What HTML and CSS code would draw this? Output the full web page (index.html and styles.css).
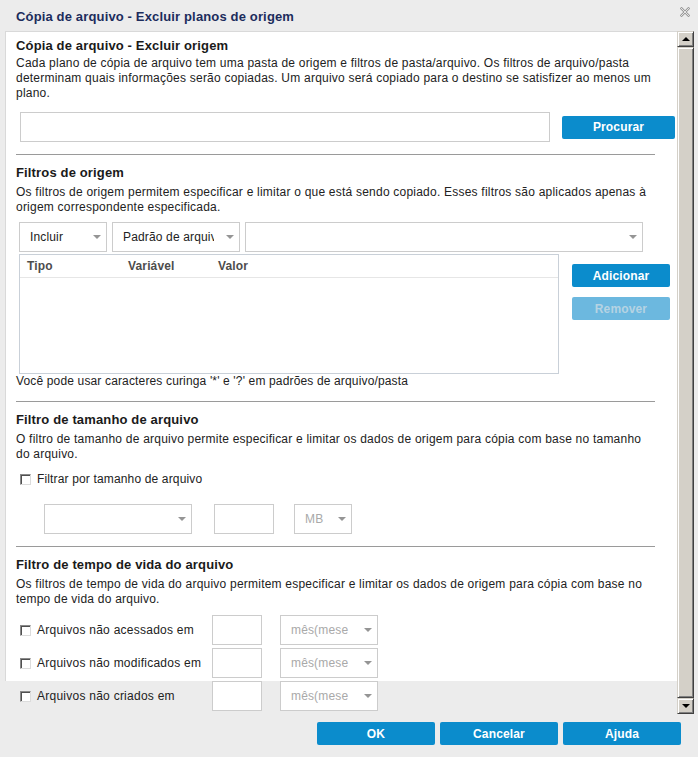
FILE: index.html
```html
<!DOCTYPE html>
<html lang="pt-BR">
<head>
<meta charset="utf-8">
<title>Cópia de arquivo - Excluir planos de origem</title>
<link rel="stylesheet" href="styles.css">
</head>
<body>
<div class="titlebar">
  <div class="title">Cópia de arquivo - Excluir planos de origem</div>
  <svg class="close" width="10" height="10" viewBox="0 0 10 10">
    <path d="M0.5 0.5 L9.5 9.5 M9.5 0.5 L0.5 9.5" stroke="#9c9c9c" stroke-width="2.6" fill="none"/>
    <path d="M0.5 0.5 L9.5 9.5 M9.5 0.5 L0.5 9.5" stroke="#ececec" stroke-width="0.9" fill="none"/>
  </svg>
</div>
<div class="main">
  <div class="panel">
    <section class="sec">
      <h2 class="heading">Cópia de arquivo - Excluir origem</h2>
      <p class="desc desc-first">Cada plano de cópia de arquivo tem uma pasta de origem e filtros de pasta/arquivo. Os filtros de arquivo/pasta<br>determinam quais informações serão copiadas. Um arquivo será copiado para o destino se satisfizer ao menos um<br>plano.</p>
      <div class="browse-row">
        <div class="textbox textbox-path"></div>
        <button class="btn btn-browse">Procurar</button>
      </div>
    </section>
    <hr class="sep">
    <section class="sec">
      <h2 class="heading">Filtros de origem</h2>
      <p class="desc">Os filtros de origem permitem especificar e limitar o que está sendo copiado. Esses filtros são aplicados apenas à<br>origem correspondente especificada.</p>
      <div class="filter-row">
        <div class="select sel-include"><span class="select-text">Incluir</span><span class="arrow"></span></div>
        <div class="select sel-type"><span class="select-text">Padrão de arquivo</span><span class="arrow"></span></div>
        <div class="select sel-value"><span class="select-text"></span><span class="arrow"></span></div>
      </div>
      <div class="table-area">
        <div class="grid-table">
          <div class="grid-head">
            <div class="cell">Tipo</div>
            <div class="cell">Variável</div>
            <div class="cell">Valor</div>
          </div>
        </div>
        <div class="side-buttons">
          <button class="btn btn-side">Adicionar</button>
          <button class="btn btn-side btn-disabled">Remover</button>
        </div>
      </div>
      <p class="hint">Você pode usar caracteres curinga '*' e '?' em padrões de arquivo/pasta</p>
    </section>
    <hr class="sep">
    <section class="sec">
      <h2 class="heading">Filtro de tamanho de arquivo</h2>
      <p class="desc">O filtro de tamanho de arquivo permite especificar e limitar os dados de origem para cópia com base no tamanho<br>do arquivo.</p>
      <label class="check-row"><span class="checkbox"></span><span>Filtrar por tamanho de arquivo</span></label>
      <div class="size-row">
        <div class="select sel-size"><span class="select-text"></span><span class="arrow"></span></div>
        <div class="textbox textbox-size"></div>
        <div class="select sel-unit"><span class="select-text disabled">MB</span><span class="arrow"></span></div>
      </div>
    </section>
    <hr class="sep">
    <section class="sec">
      <h2 class="heading">Filtro de tempo de vida do arquivo</h2>
      <p class="desc">Os filtros de tempo de vida do arquivo permitem especificar e limitar os dados de origem para cópia com base no<br>tempo de vida do arquivo.</p>
      <div class="life-rows">
        <div class="life-row">
          <label class="life-label"><span class="checkbox"></span><span>Arquivos não acessados em</span></label>
          <div class="textbox"></div>
          <div class="select"><span class="select-text disabled">mês(mese</span><span class="arrow"></span></div>
        </div>
        <div class="life-row">
          <label class="life-label"><span class="checkbox"></span><span>Arquivos não modificados em</span></label>
          <div class="textbox"></div>
          <div class="select"><span class="select-text disabled">mês(mese</span><span class="arrow"></span></div>
        </div>
        <div class="life-row">
          <label class="life-label"><span class="checkbox"></span><span>Arquivos não criados em</span></label>
          <div class="textbox"></div>
          <div class="select"><span class="select-text disabled">mês(mese</span><span class="arrow"></span></div>
        </div>
      </div>
    </section>
  </div>
  <div class="scrollbar">
    <div class="sb-btn"><span class="tri-up"></span></div>
    <div class="sb-thumb"></div>
    <div class="sb-btn"><span class="tri-down"></span></div>
  </div>
</div>
<div class="footer">
  <button class="btn btn-footer">OK</button>
  <button class="btn btn-footer">Cancelar</button>
  <button class="btn btn-footer">Ajuda</button>
</div>
</body>
</html>
```

FILE: styles.css
```css
* { box-sizing: border-box; }

html, body { margin: 0; padding: 0; }

body {
  width: 698px;
  height: 757px;
  overflow: hidden;
  background: #ececec;
  font-family: "Liberation Sans", Arial, sans-serif;
  font-size: 12px;
  color: #222;
  letter-spacing: 0.15px;
}

/* Title bar */
.titlebar {
  height: 31px;
  display: flex;
  justify-content: space-between;
  align-items: flex-start;
  padding: 7px 8px 0 16px;
}
.title {
  margin-top: 2px;
  font-size: 13px;
  line-height: 16px;
  font-weight: bold;
  color: #1c2c5c;
}
.close { display: block; }

/* Main area */
.main {
  display: flex;
  align-items: flex-start;
  margin-left: 5px;
}
.panel {
  width: 672px;
  height: 650px;
  background: #fff;
  border-top: 1px solid #d9d9d9;
  border-left: 1px solid #d9d9d9;
  padding: 6px 0 0 10px;
}

.heading {
  margin: 0;
  font-size: 13px;
  line-height: 16px;
  font-weight: bold;
  color: #1a1a1a;
}
.desc {
  margin: 4px 0 0;
  line-height: 15px;
  white-space: nowrap;
  letter-spacing: 0.22px;
}
.desc-first { margin-top: 2px; }

.sep {
  width: 639px;
  height: 1px;
  border: 0;
  margin: 12px 0 10px;
  background: #9a9a9a;
}

/* Inputs */
.textbox {
  height: 30px;
  border: 1px solid #cccccc;
  background: #fff;
}
.select {
  display: flex;
  align-items: center;
  height: 30px;
  border: 1px solid #cccccc;
  background: #fff;
  padding: 0 5px 0 10px;
}
.select-text {
  flex: 1;
  overflow: hidden;
  white-space: nowrap;
  margin-right: 12px;
  line-height: 15px;
}
.select-text.disabled { color: #a9a9a9; }
.arrow {
  flex: none;
  width: 0;
  height: 0;
  border-left: 4px solid transparent;
  border-right: 4px solid transparent;
  border-top: 4px solid #959595;
}

/* Buttons */
.btn {
  display: flex;
  align-items: center;
  justify-content: center;
  height: 23px;
  padding: 0;
  border: 0;
  border-radius: 2px;
  background: #0b8ccc;
  color: #fff;
  font-family: "Liberation Sans", Arial, sans-serif;
  font-size: 12px;
  font-weight: bold;
  letter-spacing: 0.15px;
}
.btn-disabled {
  background: #6cb8df;
  color: #b5d3e3;
}

/* Section 1 */
.browse-row {
  display: flex;
  align-items: center;
  margin: 11px 0 0 4px;
}
.textbox-path { width: 530px; }
.btn-browse { width: 113px; margin-left: 12px; }

/* Section 2 */
.filter-row {
  display: flex;
  gap: 5px;
  margin: 7px 0 0 3px;
}
.sel-include { width: 88px; }
.sel-type { width: 128px; }
.sel-value { width: 398px; }

.table-area {
  display: flex;
  margin: 2px 0 0 3px;
}
.grid-table {
  width: 540px;
  height: 120px;
  border: 1px solid #c9d0d8;
  background: #fff;
}
.grid-head {
  display: grid;
  grid-template-columns: 101px 90px 1fr;
  height: 23px;
  border-bottom: 1px solid #e6e6e6;
}
.cell {
  padding-left: 7px;
  line-height: 22px;
  font-weight: bold;
  color: #4d4d4d;
}
.side-buttons {
  display: flex;
  flex-direction: column;
  gap: 10px;
  margin-left: 13px;
  padding-top: 10px;
}
.btn-side { width: 98px; }

.hint {
  margin: 0;
  line-height: 15px;
}

/* Section 3 */
.check-row {
  display: flex;
  align-items: center;
  gap: 6px;
  margin: 10px 0 0 4px;
  line-height: 15px;
}
.checkbox {
  flex: none;
  width: 11px;
  height: 11px;
  background: #fff;
  border: 1px solid;
  border-color: #8a8a8a #dcdcdc #dcdcdc #8a8a8a;
  box-shadow: inset 1px 1px 0 #505050;
}
.size-row {
  display: flex;
  margin: 17px 0 0 28px;
}
.sel-size { width: 148px; }
.textbox-size { width: 60px; margin-left: 22px; }
.sel-unit { width: 58px; margin-left: 20px; }

/* Section 4 */
.life-rows {
  display: flex;
  flex-direction: column;
  gap: 3px;
  margin: 8px 0 0 4px;
}
.life-row {
  display: grid;
  grid-template-columns: 174px 50px 98px;
  column-gap: 18px;
  align-items: center;
  height: 30px;
}
.life-label {
  display: flex;
  align-items: center;
  gap: 6px;
  line-height: 15px;
  letter-spacing: 0.25px;
  white-space: nowrap;
}

/* Scrollbar */
.scrollbar {
  width: 17px;
  height: 683px;
  display: flex;
  flex-direction: column;
}
.sb-btn,
.sb-thumb {
  background: #d4d0c8;
  border: 1px solid;
  border-color: #d4d0c8 #404040 #404040 #d4d0c8;
  box-shadow: inset 1px 1px 0 #ffffff, inset -1px -1px 0 #808080;
}
.sb-btn {
  flex: none;
  height: 16px;
  display: flex;
  align-items: center;
  justify-content: center;
}
.sb-thumb { flex: 1; }
.tri-up,
.tri-down {
  width: 0;
  height: 0;
  border-left: 4px solid transparent;
  border-right: 4px solid transparent;
}
.tri-up { border-bottom: 4px solid #000; }
.tri-down { border-top: 4px solid #000; }

/* Footer */
.footer {
  display: flex;
  justify-content: flex-end;
  gap: 5px;
  margin-top: 8px;
  padding-right: 17px;
}
.btn-footer { width: 118px; }
```
